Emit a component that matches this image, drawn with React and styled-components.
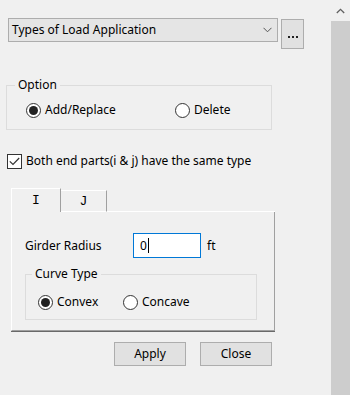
import React from "react";
import styled, { createGlobalStyle } from "styled-components";

const GlobalStyle = createGlobalStyle`
  html, body { margin: 0; padding: 0; background: #f0f0f0; }
  body {
    font-family: "Segoe UI", "Noto Sans", "Open Sans", sans-serif;
    font-size: 12px;
    color: #000;
  }
  * { box-sizing: border-box; }
`;

const Page = styled.div`
  display: flex;
  width: 350px;
  height: 395px;
  overflow: hidden;
  background: #f0f0f0;
`;

const Main = styled.div`
  flex: 1;
  display: flex;
  flex-direction: column;
  padding-top: 18px;
`;

const Scrollbar = styled.div`
  width: 19px;
  display: flex;
  flex-direction: column;
  background: #f0f0f0;
`;

const ScrollArrow = styled.div`
  height: 21px;
  display: flex;
  align-items: center;
  justify-content: center;
`;

const ScrollThumb = styled.div`
  flex: 1;
  background: #cdcdcd;
`;

const ComboRow = styled.div`
  display: flex;
  align-items: flex-start;
  gap: 3px;
  margin-left: 8px;
`;

const Combo = styled.div`
  width: 270px;
  height: 24px;
  border: 1px solid #adadad;
  background: #e5e5e5;
  display: flex;
  align-items: center;
  justify-content: space-between;
  padding: 0 5px 0 3px;
  line-height: 16px;
`;

const EllipsisButton = styled.div`
  width: 23px;
  height: 30px;
  margin-top: 1px;
  border: 1px solid #adadad;
  background: #e1e1e1;
  display: flex;
  align-items: center;
  justify-content: center;
  gap: 2px;
  padding-top: 5px;
`;

const Dot = styled.span`
  width: 2px;
  height: 2px;
  background: #222;
`;

const Group = styled.fieldset`
  margin: ${(p) => p.$mt}px 0 0 ${(p) => p.$ml}px;
  width: ${(p) => p.$w}px;
  padding: 0;
  border: 1px solid #dcdcdc;
  min-inline-size: 0;
`;

const Legend = styled.legend`
  margin-left: ${(p) => p.$ml}px;
  padding: 0 3px;
  line-height: 16px;
`;

const GroupBody = styled.div`
  padding: ${(p) => p.$pad};
`;

const RadioRow = styled.div`
  display: flex;
  align-items: center;
`;

const RadioItem = styled.label`
  display: flex;
  align-items: center;
  gap: 4px;
  width: ${(p) => (p.$w ? `${p.$w}px` : "auto")};
  line-height: 16px;
`;

const RadioCircle = styled.span`
  width: 15px;
  height: 15px;
  border-radius: 50%;
  border: 1px solid #333;
  background: #fff;
  display: flex;
  align-items: center;
  justify-content: center;
  flex-shrink: 0;
  &::after {
    content: "";
    width: 9px;
    height: 9px;
    border-radius: 50%;
    background: ${(p) => (p.$checked ? "#222" : "transparent")};
  }
`;

const CheckRow = styled.label`
  display: flex;
  align-items: center;
  gap: 4px;
  margin: 23px 0 0 7px;
  line-height: 16px;
`;

const CheckBox = styled.span`
  width: 15px;
  height: 15px;
  border: 1px solid #333;
  background: #fff;
  display: flex;
  align-items: center;
  justify-content: center;
  flex-shrink: 0;
`;

const TabRow = styled.div`
  display: flex;
  align-items: flex-end;
  margin: 19px 0 0 11px;
  width: 264px;
  height: 24px;
`;

const Tab = styled.div`
  width: ${(p) => p.$w}px;
  height: ${(p) => (p.$active ? 24 : 22)}px;
  border-top: 1px solid #fff;
  border-left: ${(p) => (p.$first ? "1px solid #fff" : "none")};
  border-right: 1px solid #a0a0a0;
  border-bottom: ${(p) => (p.$active ? "none" : "1px solid #fff")};
  display: flex;
  align-items: center;
  justify-content: center;
  font-family: "Liberation Mono", "DejaVu Sans Mono", monospace;
  font-size: 13px;
  padding-top: ${(p) => (p.$active ? 0 : 1)}px;
  color: #000;
`;

const TabFill = styled.div`
  flex: 1;
  height: 1px;
  border-bottom: 1px solid #fff;
`;

const Panel = styled.div`
  margin-left: 11px;
  width: 264px;
  border-left: 1px solid #fff;
  border-right: 1px solid #a0a0a0;
  border-bottom: 1px solid #a0a0a0;
  box-shadow: 0 1px 0 #696969;
  padding: 21px 0 10px 13px;
  display: flex;
  flex-direction: column;
`;

const FieldRow = styled.div`
  display: flex;
  align-items: center;
`;

const FieldLabel = styled.span`
  width: 108px;
  line-height: 16px;
`;

const TextBox = styled.div`
  width: 68px;
  height: 25px;
  border: 1px solid #0078d7;
  background: #fff;
  display: flex;
  align-items: center;
  padding-left: 6px;
  line-height: 16px;
`;

const Caret = styled.span`
  width: 1px;
  height: 15px;
  background: #000;
  margin-left: 1px;
`;

const Unit = styled.span`
  margin-left: 6px;
  line-height: 16px;
`;

const ButtonRow = styled.div`
  display: flex;
  gap: 14px;
  margin: 11px 0 0 114px;
`;

const Button = styled.div`
  width: 72px;
  height: 24px;
  border: 1px solid #adadad;
  background: #e1e1e1;
  display: flex;
  align-items: center;
  justify-content: center;
  line-height: 16px;
`;

const Radio = ({ checked, label, w }) => (
  <RadioItem $w={w}>
    <RadioCircle $checked={checked} />
    <span>{label}</span>
  </RadioItem>
);

export default function App() {
  return (
    <>
      <GlobalStyle />
      <Page>
        <Main>
          <ComboRow>
            <Combo>
              <span>Types of Load Application</span>
              <svg width="9" height="6" viewBox="0 0 9 6">
                <path d="M0.5 0.8 L4.5 4.8 L8.5 0.8" fill="none" stroke="#555" strokeWidth="1" />
              </svg>
            </Combo>
            <EllipsisButton>
              <Dot />
              <Dot />
              <Dot />
            </EllipsisButton>
          </ComboRow>

          <Group $mt={28} $ml={6} $w={266}>
            <Legend $ml={8}>Option</Legend>
            <GroupBody $pad="9px 0 11px 19px">
              <RadioRow>
                <Radio checked label="Add/Replace" w={149} />
                <Radio label="Delete" />
              </RadioRow>
            </GroupBody>
          </Group>

          <CheckRow>
            <CheckBox>
              <svg width="11" height="9" viewBox="0 0 11 9">
                <path d="M0.8 4.3 L4 7.5 L10.2 1" fill="none" stroke="#333" strokeWidth="1.2" />
              </svg>
            </CheckBox>
            <span>Both end parts(i &amp; j) have the same type</span>
          </CheckRow>

          <TabRow>
            <Tab $w={50} $active $first>I</Tab>
            <Tab $w={46}>J</Tab>
            <TabFill />
          </TabRow>
          <Panel>
            <FieldRow>
              <FieldLabel>Girder Radius</FieldLabel>
              <TextBox>
                <span>0</span>
                <Caret />
              </TextBox>
              <Unit>ft</Unit>
            </FieldRow>
            <Group $mt={8} $ml={0} $w={232}>
              <Legend $ml={6}>Curve Type</Legend>
              <GroupBody $pad="12px 0 9px 12px">
                <RadioRow>
                  <Radio checked label="Convex" w={85} />
                  <Radio label="Concave" />
                </RadioRow>
              </GroupBody>
            </Group>
          </Panel>

          <ButtonRow>
            <Button>Apply</Button>
            <Button>Close</Button>
          </ButtonRow>
        </Main>
        <Scrollbar>
          <ScrollArrow>
            <svg width="9" height="6" viewBox="0 0 9 6">
              <path d="M0.8 5 L4.5 1.3 L8.2 5" fill="none" stroke="#606060" strokeWidth="1.3" />
            </svg>
          </ScrollArrow>
          <ScrollThumb />
        </Scrollbar>
      </Page>
    </>
  );
}
